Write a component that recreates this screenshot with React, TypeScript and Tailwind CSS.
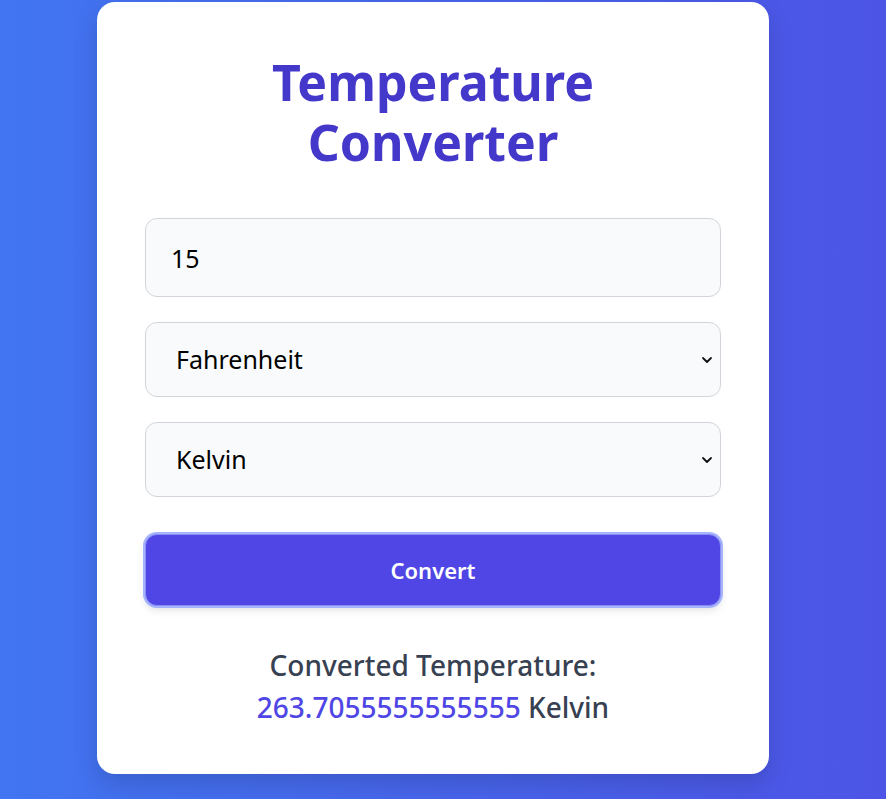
import React from "react";

function Chevron() {
  return (
    <svg className="pointer-events-none absolute right-[8px] top-1/2 -translate-y-1/2" width="12" height="12" viewBox="0 0 12 12">
      <path d="M2 4 L6 8 L10 4" fill="none" stroke="#111" strokeWidth="1.8" strokeLinecap="round" strokeLinejoin="round" />
    </svg>
  );
}

export default function App() {
  return (
    <div
      className="min-h-screen w-full bg-gradient-to-r from-[#4175f1] to-[#4c54e6] flex justify-center pt-[2px] pb-[26px] pr-[20px]"
      style={{ fontFamily: '"Noto Sans", "Open Sans", sans-serif' }}
    >
      <div className="w-[672px] bg-white rounded-[18px] shadow-[0_10px_25px_rgba(0,0,0,0.15)] px-12 pt-[50px] pb-[46px] flex flex-col">
        <h1 className="text-center text-[50px] leading-[60px] font-bold text-[#4338ca]">
          Temperature
          <br />
          Converter
        </h1>
        <div className="mt-[46px] flex flex-col gap-[25px]">
          <input
            type="text"
            defaultValue="15"
            className="h-[79px] w-full rounded-[12px] border border-[#d1d5db] bg-[#f8fafc] px-[25px] text-[25px] text-black outline-none"
          />
          <div className="relative">
            <select
              defaultValue="F"
              className="h-[75px] w-full appearance-none rounded-[12px] border border-[#d1d5db] bg-[#f8fafc] pl-[30px] text-[25px] text-black outline-none"
            >
              <option value="C">Celsius</option>
              <option value="F">Fahrenheit</option>
              <option value="K">Kelvin</option>
            </select>
            <Chevron />
          </div>
          <div className="relative">
            <select
              defaultValue="K"
              className="h-[75px] w-full appearance-none rounded-[12px] border border-[#d1d5db] bg-[#f8fafc] pl-[30px] text-[25px] text-black outline-none"
            >
              <option value="C">Celsius</option>
              <option value="F">Fahrenheit</option>
              <option value="K">Kelvin</option>
            </select>
            <Chevron />
          </div>
          <button className="mt-[12px] h-[72px] w-full rounded-[12px] bg-[#4f46e5] border border-[#8b8ff5] ring-2 ring-[#a5b4fc] text-white text-[22px] font-semibold shadow-[0_4px_8px_rgba(0,0,0,0.12)]">
            Convert
          </button>
        </div>
        <div className="mt-[38px] text-center text-[28px] leading-[42px] font-medium text-[#374151]">
          <p>Converted Temperature:</p>
          <p>
            <span className="text-[#4f46e5]">263.7055555555555</span> Kelvin
          </p>
        </div>
      </div>
    </div>
  );
}
